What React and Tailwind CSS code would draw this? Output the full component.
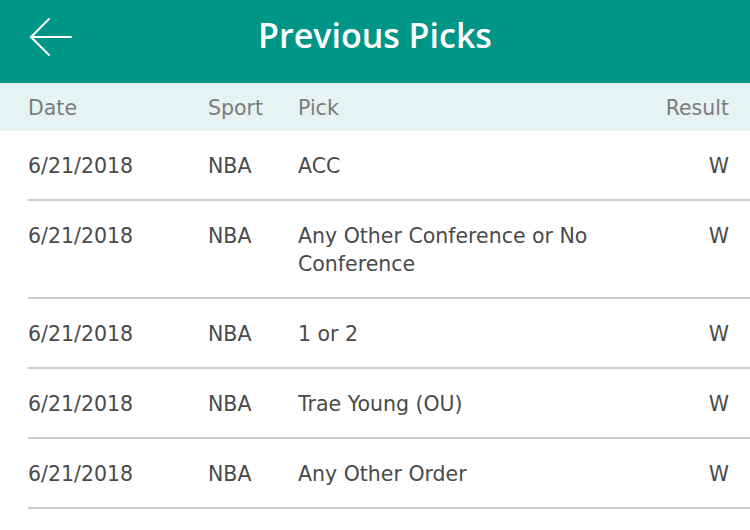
const picks = [
  { date: "6/21/2018", sport: "NBA", pick: "ACC", result: "W" },
  { date: "6/21/2018", sport: "NBA", pick: "Any Other Conference or No Conference", result: "W" },
  { date: "6/21/2018", sport: "NBA", pick: "1 or 2", result: "W" },
  { date: "6/21/2018", sport: "NBA", pick: "Trae Young (OU)", result: "W" },
  { date: "6/21/2018", sport: "NBA", pick: "Any Other Order", result: "W" },
];

function BackArrow() {
  return (
    <svg width="44" height="40" viewBox="0 0 44 40" fill="none" stroke="white" strokeWidth="2" strokeLinecap="round">
      <path d="M2 20 H42" />
      <path d="M20 2 L2 20 L20 38" />
    </svg>
  );
}

export default function App() {
  return (
    <div className="w-[750px] h-[530px] bg-white overflow-hidden" style={{ fontFamily: "'DejaVu Sans', sans-serif" }}>
      <header className="h-[83px] bg-[#009687] flex items-center relative">
        <button className="absolute left-[29px] top-[17px]">
          <BackArrow />
        </button>
        <h1
          className="flex-1 text-center text-white text-[34px] font-semibold pb-[12px]"
          style={{ fontFamily: "'Open Sans', sans-serif" }}
        >
          Previous Picks
        </h1>
      </header>

      <div className="h-[48px] bg-[#e5f3f3] flex items-center pl-[28px] pr-[21px] pt-[2px] text-[20.5px] text-[#7c7c7c]">
        <span className="w-[180px]">Date</span>
        <span className="w-[90px]">Sport</span>
        <span className="flex-1">Pick</span>
        <span>Result</span>
      </div>

      <div className="ml-[28px]">
        {picks.map((p, i) => (
          <div key={i} className="flex pt-[21px] pb-[19px] pr-[21px] border-b-2 border-[#cccccc] text-[20.5px] leading-[28px] text-[#4a4a4a]">
            <span className="w-[180px] shrink-0">{p.date}</span>
            <span className="w-[90px] shrink-0">{p.sport}</span>
            <span className="w-[320px] shrink-0">{p.pick}</span>
            <span className="flex-1 text-right">{p.result}</span>
          </div>
        ))}
      </div>
    </div>
  );
}
